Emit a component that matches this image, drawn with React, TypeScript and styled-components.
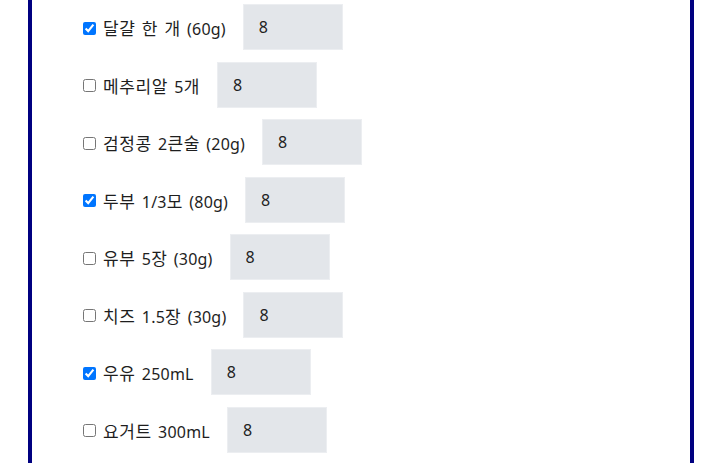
import React from "react";
import styled, { createGlobalStyle } from "styled-components";

const Global = createGlobalStyle`
  html, body { margin: 0; padding: 0; background: #fff; }
  body { font-family: "Noto Sans", "Noto Sans CJK KR", sans-serif; color: #212121; overflow: hidden; }
`;

const Panel = styled.div`
  box-sizing: border-box;
  margin-left: 28px;
  width: 666px;
  min-height: 463px;
  border-left: 4px solid #000080;
  border-right: 4px solid #000080;
  padding: 4px 0 0 51px;
  display: flex;
  flex-direction: column;
  gap: 11.5px;
`;

const Row = styled.div`
  display: flex;
  align-items: center;
  height: 46px;
`;

const Check = styled.input`
  width: 13px;
  height: 13px;
  margin: 2px 7px 0 0;
  flex: none;
`;

const Label = styled.label`
  font-size: 16px;
  line-height: 22px;
  font-family: "Noto Sans", "Noto Sans CJK KR", sans-serif;
  word-spacing: 2px;
  letter-spacing: 0.2px;
  white-space: nowrap;
  margin-top: 3px;
  color: #1e1e1e;
`;

const Ko = styled.span`
  font-family: "Noto Sans CJK KR", sans-serif;
  font-size: 17px;
  letter-spacing: 0.6px;
`;

const Amount = styled.input`
  box-sizing: border-box;
  width: 100px;
  height: 46px;
  margin-left: 17px;
  padding: 0 0 0 15px;
  border: 1px solid #eceef1;
  background: #e3e6ea;
  font-family: "Noto Sans", sans-serif;
  font-size: 16px;
  color: #222;
  outline: none;
`;

const items = [
  { label: "달걀 한 개 (60g)", checked: true },
  { label: "메추리알 5개", checked: false },
  { label: "검정콩 2큰술 (20g)", checked: false },
  { label: "두부 1/3모 (80g)", checked: true },
  { label: "유부 5장 (30g)", checked: false },
  { label: "치즈 1.5장 (30g)", checked: false },
  { label: "우유 250mL", checked: true },
  { label: "요거트 300mL", checked: false },
];

function renderText(text: string) {
  return text
    .split(/([\uAC00-\uD7A3]+)/)
    .filter((p) => p.length > 0)
    .map((p, i) =>
      /[\uAC00-\uD7A3]/.test(p) ? <Ko key={i}>{p}</Ko> : <React.Fragment key={i}>{p}</React.Fragment>
    );
}

export default function App() {
  return (
    <>
      <Global />
      <Panel>
        {items.map((it, i) => (
          <Row key={i}>
            <Check type="checkbox" defaultChecked={it.checked} id={`c${i}`} />
            <Label htmlFor={`c${i}`}>{renderText(it.label)}</Label>
            <Amount type="text" defaultValue="8" />
          </Row>
        ))}
      </Panel>
    </>
  );
}
